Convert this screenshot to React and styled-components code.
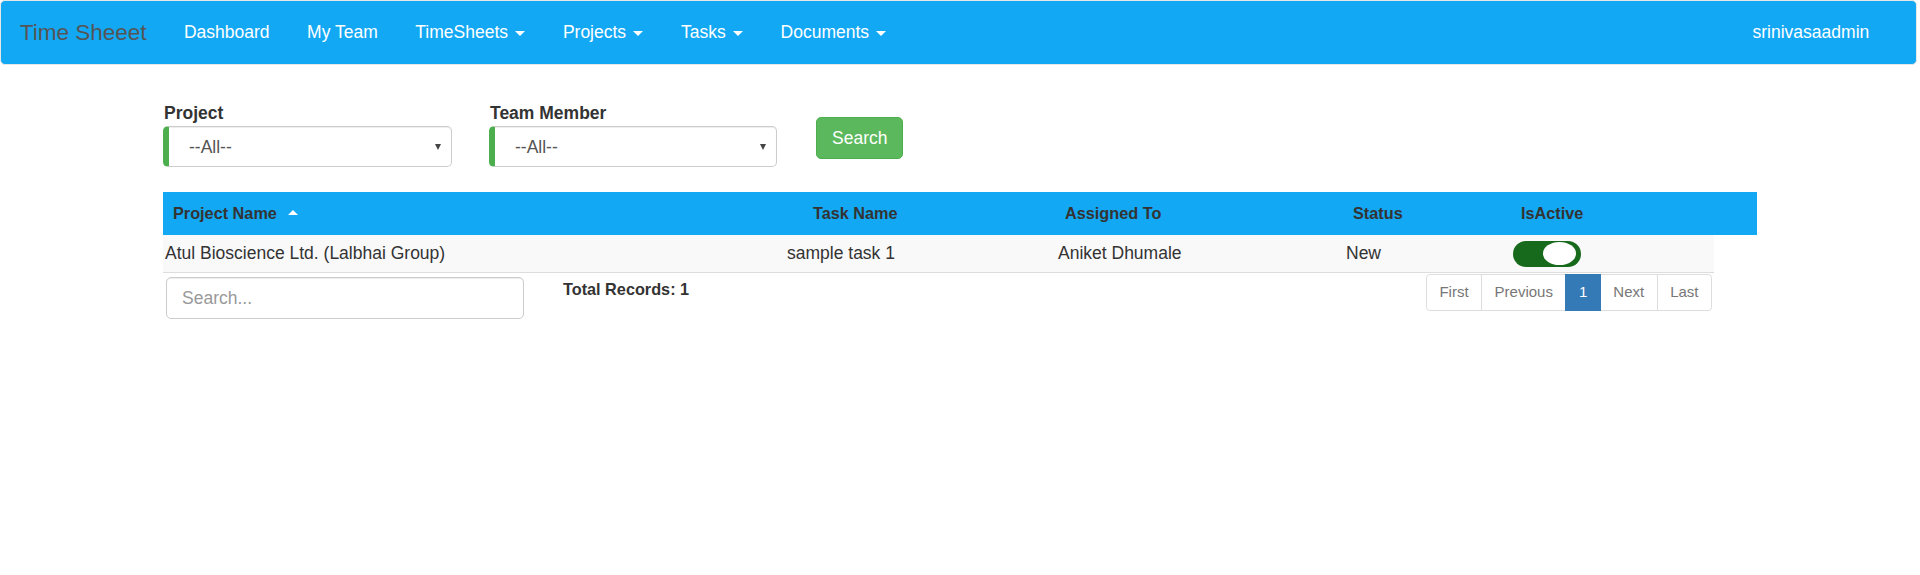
import styled, { createGlobalStyle } from 'styled-components'

const GlobalStyle = createGlobalStyle`
  * { box-sizing: border-box; }
  body {
    margin: 0;
    background: #fff;
    color: #333;
    font-family: "Liberation Sans", Arial, sans-serif;
    font-size: 17.5px;
    line-height: 25px;
  }
`

const blue = '#13a8f4'

// navbar
const Navbar = styled.nav`
  display: flex;
  align-items: center;
  height: 65px;
  margin-right: 3px;
  background: ${blue};
  border: 1px solid #e7e7e7;
  border-radius: 5px;
`

const Brand = styled.a`
  padding: 0 18.75px;
  font-size: 22.5px;
  line-height: 25px;
  color: #555;
`

const NavLink = styled.a`
  padding: 0 18.75px;
  color: #fff;
  line-height: 25px;
  cursor: pointer;
`

const NavRight = styled.div`
  margin-left: auto;
  margin-right: 28px;
`

const Caret = styled.span`
  display: inline-block;
  width: 0;
  height: 0;
  margin-left: 2.5px;
  vertical-align: middle;
  border-top: 5px solid;
  border-left: 5px solid transparent;
  border-right: 5px solid transparent;
`

// page body
const Main = styled.main`
  width: 1594px;
  margin: 0 auto;
  padding-top: 36px;
`

const Filters = styled.div`
  display: flex;
  align-items: flex-start;
`

const FilterGroup = styled.div`
  width: ${p => p.w}px;
  margin-right: ${p => p.gap}px;
`

const Label = styled.label`
  display: block;
  padding-left: 1px;
  font-weight: bold;
`

const SelectBox = styled.div`
  display: flex;
  align-items: center;
  justify-content: space-between;
  height: 41px;
  padding: 1px 10px 0 20px;
  color: #555;
  background: #fff;
  border: 1px solid #ccc;
  border-left: 6px solid #4cae4c;
  border-radius: 5px;
  box-shadow: inset 0 1px 1px rgba(0, 0, 0, 0.075);
`

const SelectArrow = styled.span`
  width: 0;
  height: 0;
  border-top: 6px solid #444;
  border-left: 3.5px solid transparent;
  border-right: 3.5px solid transparent;
`

const SearchButton = styled.button`
  height: 42px;
  margin-top: 16px;
  padding: 0 15px;
  font: inherit;
  color: #fff;
  background: #5cb85c;
  border: 1px solid #4cae4c;
  border-radius: 5px;
`

const Table = styled.div`
  margin-top: 25px;
`

const HeaderRow = styled.div`
  display: grid;
  grid-template-columns: 640px 252px 288px 168px 245px;
  align-items: center;
  height: 43px;
  background: ${blue};
`

const HeaderCell = styled.div`
  padding-left: 10px;
  font-size: 16.25px;
  font-weight: bold;
  color: #333;
`

const SortUp = styled.span`
  display: inline-block;
  width: 0;
  height: 0;
  margin-left: 11px;
  vertical-align: 4px;
  border-bottom: 5px solid #fff;
  border-left: 5px solid transparent;
  border-right: 5px solid transparent;
`

const BodyRow = styled.div`
  display: grid;
  grid-template-columns: 622px 271px 288px 167px 203px;
  align-items: center;
  width: 1551px;
  height: 38px;
  background: #f9f9f9;
  border-bottom: 1px solid #ddd;
`

const Cell = styled.div`
  padding-left: 2px;
`

const Toggle = styled.div`
  display: flex;
  align-items: center;
  justify-content: flex-end;
  width: 68px;
  height: 26px;
  padding-right: 5px;
  background: #176a1b;
  border-radius: 13px;
`

const Knob = styled.span`
  width: 33px;
  height: 23px;
  background: #fff;
  border-radius: 50%;
`

const Footer = styled.div`
  display: flex;
  align-items: flex-start;
  width: 1551px;
`

const SearchInput = styled.input`
  width: 358px;
  height: 42px;
  margin: 4px 0 0 3px;
  padding: 0 15px;
  font: inherit;
  color: #555;
  border: 1px solid #ccc;
  border-radius: 5px;
  box-shadow: inset 0 1px 1px rgba(0, 0, 0, 0.075);
  &::placeholder { color: #999; }
`

const Total = styled.div`
  margin: 4px 0 0 39px;
  font-size: 16.25px;
  font-weight: bold;
`

const Pagination = styled.ul`
  display: flex;
  list-style: none;
  margin: 1px 2px 0 auto;
  padding: 0;
`

const PageItem = styled.li`
  padding: 6.25px 12.5px;
  margin-left: -1px;
  font-size: 15px;
  line-height: 22.5px;
  color: ${p => p.active ? '#fff' : '#777'};
  background: ${p => p.active ? '#337ab7' : '#fff'};
  border: 1px solid ${p => p.active ? '#337ab7' : '#ddd'};
  position: relative;
  z-index: ${p => p.active ? 2 : 1};
  &:first-child { margin-left: 0; border-radius: 3.75px 0 0 3.75px; }
  &:last-child { border-radius: 0 3.75px 3.75px 0; }
`

const menu = [
  { label: 'Dashboard' },
  { label: 'My Team' },
  { label: 'TimeSheets', drop: true },
  { label: 'Projects', drop: true },
  { label: 'Tasks', drop: true },
  { label: 'Documents', drop: true },
]

const pages = ['First', 'Previous', '1', 'Next', 'Last']

export default function App() {
  return (
    <>
      <GlobalStyle />
      <Navbar>
        <Brand>Time Sheeet</Brand>
        {menu.map(m => (
          <NavLink key={m.label}>
            {m.label}{m.drop && <> <Caret /></>}
          </NavLink>
        ))}
        <NavRight>
          <NavLink>srinivasaadmin</NavLink>
        </NavRight>
      </Navbar>
      <Main>
        <Filters>
          <FilterGroup w={289} gap={37}>
            <Label>Project</Label>
            <SelectBox>--All--<SelectArrow /></SelectBox>
          </FilterGroup>
          <FilterGroup w={288} gap={39}>
            <Label>Team Member</Label>
            <SelectBox>--All--<SelectArrow /></SelectBox>
          </FilterGroup>
          <SearchButton>Search</SearchButton>
        </Filters>
        <Table>
          <HeaderRow>
            <HeaderCell>Project Name<SortUp /></HeaderCell>
            <HeaderCell>Task Name</HeaderCell>
            <HeaderCell>Assigned To</HeaderCell>
            <HeaderCell>Status</HeaderCell>
            <HeaderCell>IsActive</HeaderCell>
          </HeaderRow>
          <BodyRow>
            <Cell>Atul Bioscience Ltd. (Lalbhai Group)</Cell>
            <Cell>sample task 1</Cell>
            <Cell>Aniket Dhumale</Cell>
            <Cell>New</Cell>
            <Cell><Toggle><Knob /></Toggle></Cell>
          </BodyRow>
          <Footer>
            <SearchInput placeholder="Search..." />
            <Total>Total Records: 1</Total>
            <Pagination>
              {pages.map(p => <PageItem key={p} active={p === '1'}>{p}</PageItem>)}
            </Pagination>
          </Footer>
        </Table>
      </Main>
    </>
  )
}
